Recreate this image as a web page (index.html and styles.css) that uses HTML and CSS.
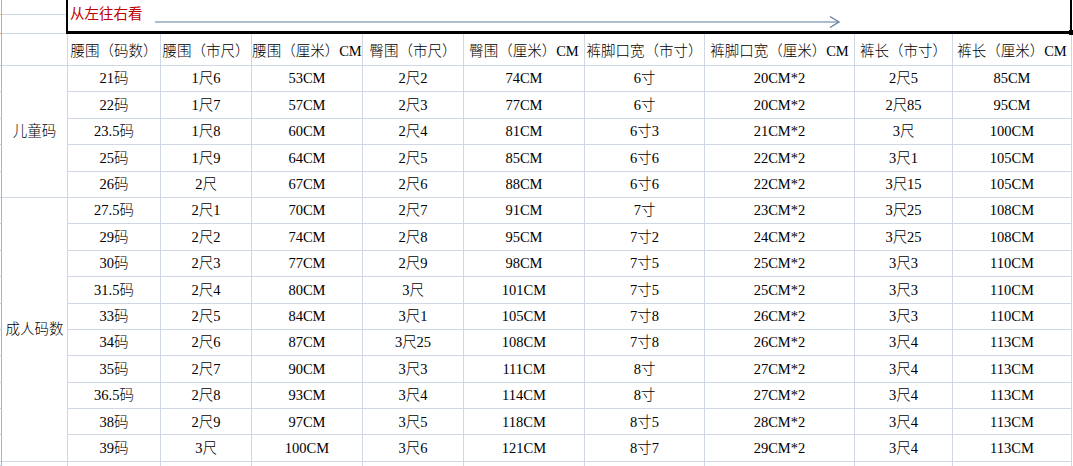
FILE: index.html
```html
<!DOCTYPE html>
<html lang="zh-CN">
<head>
<meta charset="utf-8">
<title>尺码表</title>
<link rel="stylesheet" href="styles.css">
</head>
<body>
<div class="sheet">
  <div class="rh sel"><div class="rh-top"></div></div>
  <div class="corner"><div class="corner-top"></div></div>
  <div class="title">
    <span class="title-text">从左往右看</span>
    <svg class="arrow" width="690" height="32" viewBox="0 0 690 32">
      <line x1="0" y1="22" x2="684" y2="22" stroke="#5b7c9c" stroke-width="1.2"/>
      <polyline points="675,16.5 684,22 675,27.5" fill="none" stroke="#5b7c9c" stroke-width="1.2"/>
    </svg>
  </div>
  <div class="edge"></div>

  <div class="rh"></div>
  <div class="c"></div>
  <div class="c hd">腰围（码数）</div>
  <div class="c hd">腰围（市尺）</div>
  <div class="c hd">腰围（厘米）CM</div>
  <div class="c hd">臀围（市尺）</div>
  <div class="c hd">臀围（厘米）CM</div>
  <div class="c hd">裤脚口宽（市寸）</div>
  <div class="c hd">裤脚口宽（厘米）CM</div>
  <div class="c hd">裤长（市寸）</div>
  <div class="c hd">裤长（厘米）CM</div>
  <div class="edge"></div>

  <div class="c grp kids">儿童码</div>
  <div class="c grp adults">成人码数</div>

  <div class="rh"></div><div class="c">21码</div><div class="c">1尺6</div><div class="c">53CM</div><div class="c">2尺2</div><div class="c">74CM</div><div class="c">6寸</div><div class="c">20CM*2</div><div class="c">2尺5</div><div class="c">85CM</div><div class="edge"></div>
  <div class="rh"></div><div class="c">22码</div><div class="c">1尺7</div><div class="c">57CM</div><div class="c">2尺3</div><div class="c">77CM</div><div class="c">6寸</div><div class="c">20CM*2</div><div class="c">2尺85</div><div class="c">95CM</div><div class="edge"></div>
  <div class="rh"></div><div class="c">23.5码</div><div class="c">1尺8</div><div class="c">60CM</div><div class="c">2尺4</div><div class="c">81CM</div><div class="c">6寸3</div><div class="c">21CM*2</div><div class="c">3尺</div><div class="c">100CM</div><div class="edge"></div>
  <div class="rh"></div><div class="c">25码</div><div class="c">1尺9</div><div class="c">64CM</div><div class="c">2尺5</div><div class="c">85CM</div><div class="c">6寸6</div><div class="c">22CM*2</div><div class="c">3尺1</div><div class="c">105CM</div><div class="edge"></div>
  <div class="rh"></div><div class="c">26码</div><div class="c">2尺</div><div class="c">67CM</div><div class="c">2尺6</div><div class="c">88CM</div><div class="c">6寸6</div><div class="c">22CM*2</div><div class="c">3尺15</div><div class="c">105CM</div><div class="edge"></div>
  <div class="rh"></div><div class="c">27.5码</div><div class="c">2尺1</div><div class="c">70CM</div><div class="c">2尺7</div><div class="c">91CM</div><div class="c">7寸</div><div class="c">23CM*2</div><div class="c">3尺25</div><div class="c">108CM</div><div class="edge"></div>
  <div class="rh"></div><div class="c">29码</div><div class="c">2尺2</div><div class="c">74CM</div><div class="c">2尺8</div><div class="c">95CM</div><div class="c">7寸2</div><div class="c">24CM*2</div><div class="c">3尺25</div><div class="c">108CM</div><div class="edge"></div>
  <div class="rh"></div><div class="c">30码</div><div class="c">2尺3</div><div class="c">77CM</div><div class="c">2尺9</div><div class="c">98CM</div><div class="c">7寸5</div><div class="c">25CM*2</div><div class="c">3尺3</div><div class="c">110CM</div><div class="edge"></div>
  <div class="rh"></div><div class="c">31.5码</div><div class="c">2尺4</div><div class="c">80CM</div><div class="c">3尺</div><div class="c">101CM</div><div class="c">7寸5</div><div class="c">25CM*2</div><div class="c">3尺3</div><div class="c">110CM</div><div class="edge"></div>
  <div class="rh"></div><div class="c">33码</div><div class="c">2尺5</div><div class="c">84CM</div><div class="c">3尺1</div><div class="c">105CM</div><div class="c">7寸8</div><div class="c">26CM*2</div><div class="c">3尺3</div><div class="c">110CM</div><div class="edge"></div>
  <div class="rh"></div><div class="c">34码</div><div class="c">2尺6</div><div class="c">87CM</div><div class="c">3尺25</div><div class="c">108CM</div><div class="c">7寸8</div><div class="c">26CM*2</div><div class="c">3尺4</div><div class="c">113CM</div><div class="edge"></div>
  <div class="rh"></div><div class="c">35码</div><div class="c">2尺7</div><div class="c">90CM</div><div class="c">3尺3</div><div class="c">111CM</div><div class="c">8寸</div><div class="c">27CM*2</div><div class="c">3尺4</div><div class="c">113CM</div><div class="edge"></div>
  <div class="rh"></div><div class="c">36.5码</div><div class="c">2尺8</div><div class="c">93CM</div><div class="c">3尺4</div><div class="c">114CM</div><div class="c">8寸</div><div class="c">27CM*2</div><div class="c">3尺4</div><div class="c">113CM</div><div class="edge"></div>
  <div class="rh"></div><div class="c">38码</div><div class="c">2尺9</div><div class="c">97CM</div><div class="c">3尺5</div><div class="c">118CM</div><div class="c">8寸5</div><div class="c">28CM*2</div><div class="c">3尺4</div><div class="c">113CM</div><div class="edge"></div>
  <div class="rh"></div><div class="c">39码</div><div class="c">3尺</div><div class="c">100CM</div><div class="c">3尺6</div><div class="c">121CM</div><div class="c">8寸7</div><div class="c">29CM*2</div><div class="c">3尺4</div><div class="c">113CM</div><div class="edge"></div>

  <div class="rh"></div><div class="v"></div><div class="v"></div><div class="v"></div><div class="v"></div><div class="v"></div><div class="v"></div><div class="v"></div><div class="v"></div><div class="v"></div><div class="v"></div><div class="edge"></div>
</div>
</body>
</html>
```

FILE: styles.css
```css
* {
  box-sizing: border-box;
}

html, body {
  margin: 0;
  padding: 0;
  background: #ffffff;
}

body {
  font-family: "Liberation Serif", "Noto Sans CJK SC", serif;
  font-size: 14.5px;
  font-weight: 300;
  color: #000000;
}

.sheet {
  display: grid;
  grid-template-columns: 2px 66px 93px 91px 111px 101px 121px 120px 150px 98px 119px 1px;
  grid-template-rows: 34px 32px repeat(15, 26.4px) 1fr;
  width: 1073px;
  height: 466px;
  overflow: hidden;
}

.rh {
  border-right: 1px solid #9eb6ce;
  border-bottom: 1px solid #c3cfdd;
}

.rh.sel {
  border-right-color: #f2a446;
  border-bottom-color: #f2a446;
}

.rh-top {
  height: 15px;
  border-bottom: 1px solid #f2c98e;
}

.corner {
  border-bottom: 1px solid #d0d7e5;
}

.corner-top {
  height: 15px;
  border-bottom: 1px solid #d0d7e5;
}

.c {
  display: flex;
  align-items: center;
  justify-content: center;
  white-space: nowrap;
  border-right: 1px solid #d0d7e5;
  border-bottom: 1px solid #d0d7e5;
  line-height: 1;
}

.hd {
  padding-top: 3px;
}

.grp {
  grid-column: 2;
}

.kids {
  grid-row: 3 / span 5;
}

.adults {
  grid-row: 8 / span 10;
}

.v {
  border-right: 1px solid #d0d7e5;
}

.title {
  grid-column: span 9;
  position: relative;
  margin-left: -2px;
  border: 2px solid #000000;
  border-bottom-width: 3px;
  border-top: 0;
  display: flex;
  align-items: stretch;
  padding-left: 2px;
}

.title::after {
  content: "";
  position: absolute;
  right: -3px;
  bottom: -4px;
  width: 4px;
  height: 5px;
  background: #000000;
}

.title-text {
  color: #c00000;
  font-weight: 400;
  align-self: center;
  padding-bottom: 3px;
  line-height: 1;
}

.arrow {
  display: block;
  margin-left: 12px;
}
```
